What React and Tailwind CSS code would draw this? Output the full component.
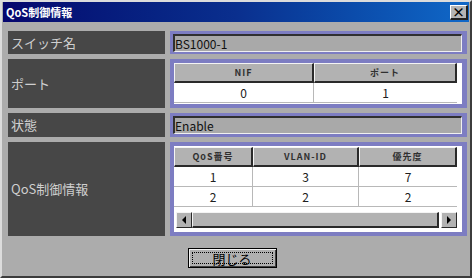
const jp = { fontFamily: '"Noto Sans CJK JP", "Liberation Sans", sans-serif' }

function Label({ children }) {
  return (
    <div className="w-[157px] shrink-0 bg-[#474747] flex items-center pl-[3px] text-[13px] text-[#cfcfcf]">
      {children}
    </div>
  )
}

function Field({ children }) {
  return (
    <div className="h-[18px] bg-[#a9a9a9] border-t-2 border-l-2 border-t-[#303030] border-l-[#303030] border-r border-b border-r-[#f0f0f0] border-b-[#f0f0f0] flex items-center text-[12px] text-[#101010] leading-none">
      {children}
    </div>
  )
}

function Head({ children, className = '' }) {
  return (
    <div className={`h-[20px] bg-[#b2b2b2] border-t border-l border-t-[#f4f4f4] border-l-[#f4f4f4] border-r-2 border-b-2 border-r-[#2a2a2a] border-b-[#2a2a2a] flex items-center justify-center text-[9px] font-bold tracking-[1px] text-[#303030] ${className}`}>
      {children}
    </div>
  )
}

function Cell({ children, className = '' }) {
  return (
    <div className={`h-[20px] flex items-center justify-center text-[12px] text-[#202020] border-b border-[#b8b8b8] ${className}`}>
      {children}
    </div>
  )
}

function Arrow({ dir }) {
  return (
    <div className="w-[16px] h-[16px] bg-[#b2b2b2] border-t border-l border-t-[#f4f4f4] border-l-[#f4f4f4] border-r border-b border-r-[#2a2a2a] border-b-[#2a2a2a] flex items-center justify-center">
      <svg width="6" height="8" viewBox="0 0 6 8">
        {dir === 'left' ? <path d="M5 0 L1 4 L5 8 Z" fill="#000" /> : <path d="M1 0 L5 4 L1 8 Z" fill="#000" />}
      </svg>
    </div>
  )
}

export default function App() {
  const qos = [
    { no: 1, vlan: 3, pri: 7 },
    { no: 2, vlan: 2, pri: 2 },
  ]

  return (
    <div className="w-[474px] h-[280px] bg-white" style={jp}>
      <div className="w-[472px] h-[278px] bg-[#acacac] border-2 border-t-[#dcdcdc] border-l-[#dcdcdc] border-r-[#3c3c3c] border-b-[#3c3c3c] flex flex-col">
        <div className="h-[20px] mx-[1px] bg-gradient-to-r from-[#06066e] via-[#0a2f8e] to-[#1068c8] flex items-center justify-between pl-[3px] pr-[1px]">
          <span className="text-[11px] font-bold text-white">QoS制御情報</span>
          <div className="w-[18px] h-[15px] bg-[#b4b4b4] border-t border-l border-t-white border-l-white border-r-2 border-b-2 border-r-[#202020] border-b-[#202020] flex items-center justify-center text-[13px] font-bold leading-none text-black">
            ×
          </div>
        </div>

        <div className="flex flex-col gap-[5px] pl-[6px] pr-[3px] pt-[9px]">
          <div className="h-[23px] flex gap-[5px]">
            <Label>スイッチ名</Label>
            <div className="flex-1 bg-[#7d7dc2] p-[3px] pr-[5px]">
              <Field>BS1000-1</Field>
            </div>
          </div>

          <div className="h-[49px] flex gap-[5px]">
            <Label>ポート</Label>
            <div className="flex-1 bg-[#7d7dc2] p-[4px] pr-[5px]">
              <div className="h-full bg-white">
                <div className="grid grid-cols-[140px_143px]">
                  <Head>NIF</Head>
                  <Head>ポート</Head>
                  <Cell className="border-r border-r-[#b8b8b8] h-[18px]">0</Cell>
                  <Cell className="h-[18px]">1</Cell>
                </div>
              </div>
            </div>
          </div>

          <div className="h-[24px] flex gap-[5px]">
            <Label>状態</Label>
            <div className="flex-1 bg-[#7d7dc2] p-[3px] pr-[5px]">
              <Field>Enable</Field>
            </div>
          </div>

          <div className="h-[94px] flex gap-[5px]">
            <Label>QoS制御情報</Label>
            <div className="flex-1 bg-[#7d7dc2] p-[4px] pr-[5px]">
              <div className="h-full bg-white flex flex-col pt-[1px]">
                <div className="grid grid-cols-[79px_106px_98px]">
                  <Head>QoS番号</Head>
                  <Head>VLAN-ID</Head>
                  <Head>優先度</Head>
                  {qos.map(r => (
                    <div key={r.no} className="contents">
                      <Cell className="border-r border-r-[#b8b8b8]">{r.no}</Cell>
                      <Cell className="border-r border-r-[#b8b8b8]">{r.vlan}</Cell>
                      <Cell>{r.pri}</Cell>
                    </div>
                  ))}
                </div>
                <div className="mt-[5px] ml-[2px] w-[281px] h-[16px] flex">
                  <Arrow dir="left" />
                  <div className="flex-1 bg-[#b2b2b2] border-t border-l border-t-[#f4f4f4] border-l-[#f4f4f4] border-r-2 border-b-2 border-r-[#2a2a2a] border-b-[#2a2a2a] mr-[2px]" />
                  <Arrow dir="right" />
                </div>
              </div>
            </div>
          </div>
        </div>

        <div className="flex justify-center mt-[12px] pr-[8px]">
          <div className="w-[89px] h-[20px] bg-[#b0b0b0] border border-black shadow-[inset_1px_1px_0_#f4f4f4,inset_-1px_-1px_0_#404040] p-[3px]">
            <div className="h-full border border-dotted border-black flex items-center justify-center text-[13px] leading-none text-black">
              閉じる
            </div>
          </div>
        </div>
      </div>
    </div>
  )
}
